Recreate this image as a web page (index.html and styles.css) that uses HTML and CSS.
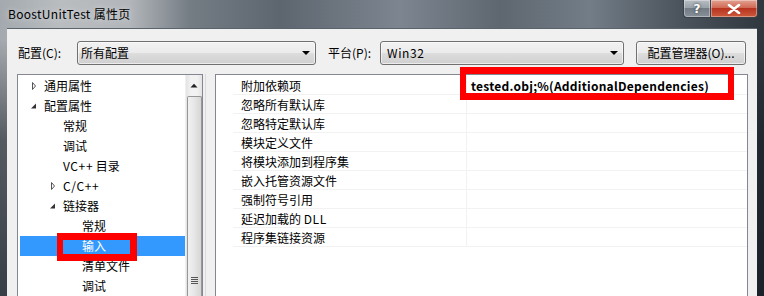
FILE: index.html
```html
<!DOCTYPE html>
<html lang="zh-CN">
<head>
<meta charset="utf-8">
<title>BoostUnitTest 属性页</title>
<link rel="stylesheet" href="styles.css">
</head>
<body>
<div class="window">
  <div class="titlebar">
    <span class="title">BoostUnitTest 属性页</span>
    <div class="caption">
      <div class="cap-btn help">?</div>
      <div class="cap-btn close">
        <svg width="14" height="10" viewBox="0 0 14 10"><path d="M2 1 L12 9 M12 1 L2 9" stroke="#fff" stroke-width="2.6" stroke-linecap="round"/></svg>
      </div>
    </div>
  </div>
  <div class="client">
    <div class="toolbar">
      <span class="label l1">配置(C):</span>
      <div class="combo c1"><span class="combo-text">所有配置</span><span class="arrow"></span></div>
      <span class="label l2">平台(P):</span>
      <div class="combo c2"><span class="combo-text latin">Win32</span><span class="arrow"></span></div>
      <div class="button">配置管理器(O)...</div>
    </div>
    <div class="main">
      <div class="tree">
        <div class="tree-items">
          <div class="row lv0"><span class="tw"><svg width="8" height="10" viewBox="0 0 8 10"><path d="M2.5 1.5 L5.5 5 L2.5 8.5 Z" fill="none" stroke="#555" stroke-width="1"/></svg></span>通用属性</div>
          <div class="row lv0"><span class="tw"><svg width="8" height="10" viewBox="0 0 8 10"><path d="M6 2.5 L6 7.5 L1 7.5 Z" fill="#333"/></svg></span>配置属性</div>
          <div class="row lv1"><span class="tw"></span>常规</div>
          <div class="row lv1"><span class="tw"></span>调试</div>
          <div class="row lv1"><span class="tw"></span><span class="latin">VC++ </span>&nbsp;目录</div>
          <div class="row lv1"><span class="tw"><svg width="8" height="10" viewBox="0 0 8 10"><path d="M2.5 1.5 L5.5 5 L2.5 8.5 Z" fill="none" stroke="#555" stroke-width="1"/></svg></span><span class="latin">C/C++</span></div>
          <div class="row lv1"><span class="tw"><svg width="8" height="10" viewBox="0 0 8 10"><path d="M6 2.5 L6 7.5 L1 7.5 Z" fill="#333"/></svg></span>链接器</div>
          <div class="row lv2"><span class="tw"></span>常规</div>
          <div class="row lv2 selected"><span class="tw"></span>输入</div>
          <div class="row lv2"><span class="tw"></span>清单文件</div>
          <div class="row lv2"><span class="tw"></span>调试</div>
        </div>
        <div class="vscroll">
          <div class="sb-up"><svg width="8" height="5" viewBox="0 0 8 5"><path d="M0.5 4.5 L4 0.8 L7.5 4.5 Z" fill="#222"/></svg></div>
          <div class="sb-thumb">
            <div class="grip"><span></span><span></span><span></span><span></span></div>
          </div>
        </div>
      </div>
      <div class="splitter"><span class="split-line"></span></div>
      <div class="grid">
        <div class="grid-rows">
          <div class="grow"><span class="gutter"></span><span class="name">附加依赖项</span><span class="value bold">tested.obj;%(AdditionalDependencies)</span></div>
          <div class="grow"><span class="gutter"></span><span class="name">忽略所有默认库</span><span class="value"></span></div>
          <div class="grow"><span class="gutter"></span><span class="name">忽略特定默认库</span><span class="value"></span></div>
          <div class="grow"><span class="gutter"></span><span class="name">模块定义文件</span><span class="value"></span></div>
          <div class="grow"><span class="gutter"></span><span class="name">将模块添加到程序集</span><span class="value"></span></div>
          <div class="grow"><span class="gutter"></span><span class="name">嵌入托管资源文件</span><span class="value"></span></div>
          <div class="grow"><span class="gutter"></span><span class="name">强制符号引用</span><span class="value"></span></div>
          <div class="grow"><span class="gutter"></span><span class="name">延迟加载的 <span class="latin">DLL</span></span><span class="value"></span></div>
          <div class="grow"><span class="gutter"></span><span class="name">程序集链接资源</span><span class="value"></span></div>
        </div>
      </div>
      <div class="right-gap"></div>
    </div>
  </div>
  <div class="mark mark-value"></div>
  <div class="mark mark-input"></div>
</div>
</body>
</html>
```

FILE: styles.css
```css
* { box-sizing: border-box; margin: 0; padding: 0; }
html, body { width: 764px; height: 296px; overflow: hidden; }
body {
  font-family: "Noto Sans CJK SC", "Noto Sans", sans-serif;
  font-size: 12px;
  color: #000;
  background: #2a3038;
}
.latin { letter-spacing: 0.6px; }
.window {
  position: relative;
  width: 764px;
  height: 296px;
  display: flex;
  flex-direction: column;
  background:
    linear-gradient(180deg, rgba(0,0,0,0) 0, rgba(0,0,0,0) 40px, rgba(20,26,34,0.55) 140px, rgba(20,26,34,0.75) 296px),
    linear-gradient(90deg, #a3a9ae 0, #b9bdc0 60px, #b2b6ba 130px, #747c84 190px, #5d666f 280px, #7d8690 400px, #5e6770 500px, #737d87 590px, #4b535c 680px, #2f363e 764px);
}
.titlebar {
  height: 28px;
  flex: none;
  display: flex;
  align-items: flex-start;
}
.title {
  margin-left: 8px;
  line-height: 28px;
  font-size: 12px;
  letter-spacing: 0.3px;
  color: #000;
  text-shadow: 0 0 6px rgba(255,255,255,0.6);
}
.caption {
  margin-left: auto;
  margin-right: 6px;
  display: flex;
}
.cap-btn {
  height: 18px;
  display: flex;
  align-items: center;
  justify-content: center;
  border: 1px solid #3b4148;
  border-top: none;
  color: #fff;
  font-family: "DejaVu Sans", sans-serif;
  font-weight: bold;
  font-size: 12px;
  box-shadow: inset 0 0 0 1px rgba(255,255,255,0.35);
}
.help {
  width: 27px;
  border-radius: 0 0 0 4px;
  border-right: none;
  background: linear-gradient(180deg, #b7bdc3 0, #9aa2aa 45%, #737c85 50%, #88919a 100%);
  text-shadow: 0 0 3px #333;
}
.close {
  width: 48px;
  border-radius: 0 0 4px 0;
  background: linear-gradient(180deg, #e3a292 0, #d06a55 45%, #b83420 50%, #cc5a3c 100%);
}
.client {
  flex: 1;
  margin: 0 7px;
  background: #f0f0f0;
  border-top: 1px solid #5b636b;
  display: flex;
  flex-direction: column;
  min-height: 0;
}
.toolbar {
  height: 45px;
  flex: none;
  display: flex;
  align-items: flex-start;
  padding-top: 12px;
  padding-left: 11px;
}
.label {
  line-height: 24px;
  color: #000;
}
.l1 { width: 59px; }
.l2 { width: 52px; margin-left: 12px; }
.combo, .button {
  height: 24px;
  border: 1px solid #707070;
  border-radius: 3px;
  background: linear-gradient(180deg, #f2f2f2 0, #ebebeb 48%, #dddddd 52%, #cfcfcf 100%);
  box-shadow: inset 0 0 0 1px rgba(255,255,255,0.6);
  display: flex;
  align-items: center;
}
.c1 { width: 239px; }
.c2 { width: 244px; }
.combo-text {
  flex: 1;
  padding-left: 3px;
  line-height: 22px;
}
.c2 .combo-text { padding-left: 6px; }
.arrow {
  width: 0;
  height: 0;
  border-left: 4px solid transparent;
  border-right: 4px solid transparent;
  border-top: 4px solid #000;
  margin-right: 5px;
}
.button {
  width: 110px;
  margin-left: 12px;
  justify-content: center;
  line-height: 22px;
}
.main {
  flex: 1;
  display: flex;
  min-height: 0;
  padding-left: 10px;
}
.tree {
  width: 186px;
  border: 1px solid #828790;
  border-bottom: none;
  background: #fff;
  display: flex;
}
.tree-items {
  flex: 1;
  padding: 1px 0 0 2px;
}
.row {
  height: 20px;
  line-height: 20px;
  display: flex;
  align-items: center;
  white-space: nowrap;
}
.lv0 { padding-left: 10px; }
.lv1 { padding-left: 29px; }
.lv2 { padding-left: 48px; }
.tw {
  width: 14px;
  height: 20px;
  display: flex;
  align-items: center;
  flex: none;
}
.selected {
  background: #3399ff;
  color: #fff;
}
.vscroll {
  width: 17px;
  background: linear-gradient(90deg, #e3e3e3 0, #f2f2f2 30%, #f2f2f2 70%, #e3e3e3 100%);
  border-left: 1px solid #f0f0f0;
  display: flex;
  flex-direction: column;
  align-items: center;
}
.sb-up {
  height: 20px;
  width: 100%;
  display: flex;
  align-items: center;
  justify-content: center;
}
.sb-thumb {
  width: 15px;
  flex: 1;
  margin-top: 1px;
  border: 1px solid #979797;
  border-bottom: none;
  border-radius: 2px 2px 0 0;
  background: linear-gradient(90deg, #f1f1f1 0, #e6e6e6 50%, #d6d6d6 100%);
  display: flex;
  flex-direction: column;
  justify-content: flex-end;
  align-items: center;
  padding-bottom: 12px;
}
.grip {
  display: flex;
  flex-direction: column;
  gap: 1px;
}
.grip span {
  width: 7px;
  height: 1px;
  background: #555;
}
.splitter {
  width: 12px;
  flex: none;
  display: flex;
}
.split-line {
  width: 1px;
  margin-left: 2px;
  background: #dcdcdc;
}
.grid {
  width: 533px;
  border: 1px solid #828790;
  border-bottom: none;
  background: #fff;
}
.grid-rows {
  padding-top: 1px;
}
.grow {
  height: 19px;
  display: flex;
  white-space: nowrap;
}
.gutter {
  width: 17px;
  flex: none;
}
.name {
  width: 233px;
  flex: none;
  padding-left: 8px;
  line-height: 19px;
  border-bottom: 1px solid #f2f2f2;
}
.value {
  flex: 1;
  padding-left: 4px;
  line-height: 19px;
  border-left: 1px solid #f2f2f2;
  border-bottom: 1px solid #f2f2f2;
}
.bold { font-weight: bold; letter-spacing: 0.25px; }
.right-gap { width: 9px; }
.mark {
  position: absolute;
  border: 6px solid #ff0000;
  border-top-width: 7px;
  border-bottom-width: 7px;
}
.mark-value { left: 460px; top: 67px; width: 274px; height: 33px; }
.mark-input { left: 57px; top: 233px; width: 80px; height: 28px; border-right-width: 7px; }
```
